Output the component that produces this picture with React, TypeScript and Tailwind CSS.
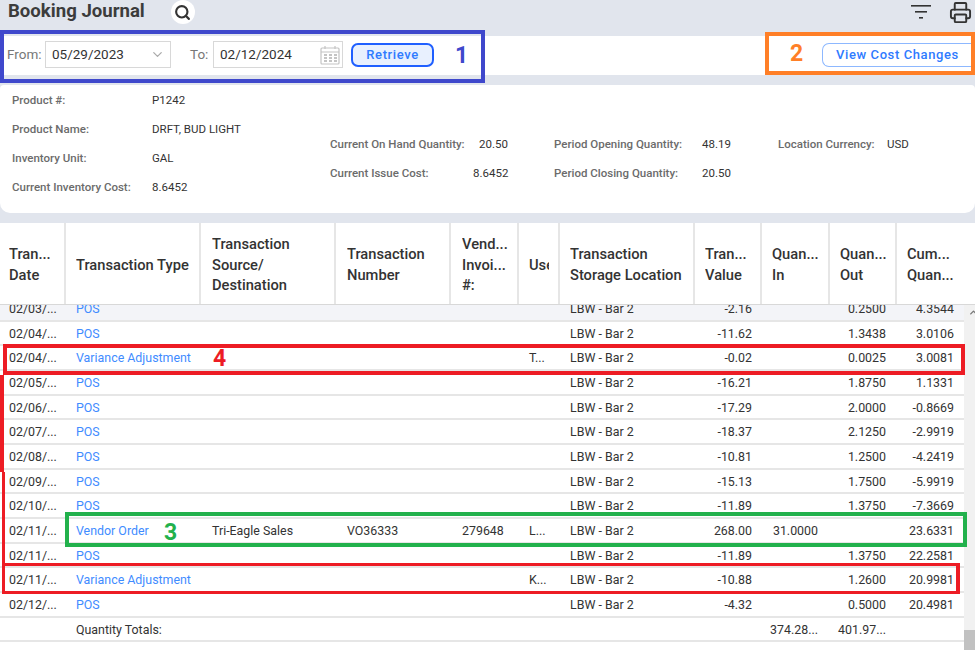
import { ChevronDown, ChevronUp, Printer, Search } from 'lucide-react';

const cols = 'grid grid-cols-[66px_135px_135px_115px_68px_41px_135px_67px_68px_67px_68px]';

type Row = {
  date: string;
  type: string;
  source?: string;
  number?: string;
  invoice?: string;
  user?: string;
  value: string;
  qtyIn?: string;
  qtyOut?: string;
  cum: string;
};

const rows: Row[] = [
  { date: '02/03/...', type: 'POS', value: '-2.16', qtyOut: '0.2500', cum: '4.3544' },
  { date: '02/04/...', type: 'POS', value: '-11.62', qtyOut: '1.3438', cum: '3.0106' },
  { date: '02/04/...', type: 'Variance Adjustment', user: 'T...', value: '-0.02', qtyOut: '0.0025', cum: '3.0081' },
  { date: '02/05/...', type: 'POS', value: '-16.21', qtyOut: '1.8750', cum: '1.1331' },
  { date: '02/06/...', type: 'POS', value: '-17.29', qtyOut: '2.0000', cum: '-0.8669' },
  { date: '02/07/...', type: 'POS', value: '-18.37', qtyOut: '2.1250', cum: '-2.9919' },
  { date: '02/08/...', type: 'POS', value: '-10.81', qtyOut: '1.2500', cum: '-4.2419' },
  { date: '02/09/...', type: 'POS', value: '-15.13', qtyOut: '1.7500', cum: '-5.9919' },
  { date: '02/10/...', type: 'POS', value: '-11.89', qtyOut: '1.3750', cum: '-7.3669' },
  { date: '02/11/...', type: 'Vendor Order', source: 'Tri-Eagle Sales', number: 'VO36333', invoice: '279648', user: 'L...', value: '268.00', qtyIn: '31.0000', cum: '23.6331' },
  { date: '02/11/...', type: 'POS', value: '-11.89', qtyOut: '1.3750', cum: '22.2581' },
  { date: '02/11/...', type: 'Variance Adjustment', user: 'K...', value: '-10.88', qtyOut: '1.2600', cum: '20.9981' },
  { date: '02/12/...', type: 'POS', value: '-4.32', qtyOut: '0.5000', cum: '20.4981' },
];

const headers = [
  { pad: 'pl-[9px]', lines: ['Tran...', 'Date'] },
  { pad: 'pl-[10px]', lines: ['Transaction Type'] },
  { pad: 'pl-[11px]', lines: ['Transaction', 'Source/', 'Destination'] },
  { pad: 'pl-[11px]', lines: ['Transaction', 'Number'] },
  { pad: 'pl-[11px]', lines: ['Vend...', 'Invoi...', '#:'] },
  { pad: 'pl-[10px]', lines: ['Use'] },
  { pad: 'pl-[10px]', lines: ['Transaction', 'Storage Location'] },
  { pad: 'pl-[10px]', lines: ['Tran...', 'Value'] },
  { pad: 'pl-[10px]', lines: ['Quan...', 'In'] },
  { pad: 'pl-[10px]', lines: ['Quan...', 'Out'] },
  { pad: 'pl-[10px]', lines: ['Cum...', 'Quan...'] },
];

function Info({ label, value, labelW }: { label: string; value: string; labelW: string }) {
  return (
    <div className="flex h-[29px] items-center">
      <span className={`${labelW} text-[#6b6b6b] font-medium`}>{label}</span>
      <span className="text-[#333]">{value}</span>
    </div>
  );
}

function BodyRow({ row, index }: { row: Row; index: number }) {
  return (
    <div className={`${cols} h-[24.67px] items-center border-b-2 border-[#e6e6e6] pt-[2px] text-[12.4px] text-[#333] ${index === 0 ? 'bg-[#f3f4f8]' : 'bg-white'}`}>
      <span className="pl-[9px]">{row.date}</span>
      <span className="pl-[10px] text-[#3f8cff]">{row.type}</span>
      <span className="pl-[11px]">{row.source}</span>
      <span className="pl-[11px]">{row.number}</span>
      <span className="pl-[11px]">{row.invoice}</span>
      <span className="pl-[10px]">{row.user}</span>
      <span className="pl-[10px]">LBW - Bar 2</span>
      <span className="pr-[10px] text-right">{row.value}</span>
      <span className="pr-[12px] text-right">{row.qtyIn}</span>
      <span className="pr-[11px] text-right">{row.qtyOut}</span>
      <span className="pr-[11px] text-right">{row.cum}</span>
    </div>
  );
}

export default function App() {
  return (
    <div className="relative h-[650px] w-[975px] overflow-hidden bg-[#e1e5ed] font-['Roboto',sans-serif]">
      <header className="flex h-[36px] items-center pb-[12px] pl-[8px] pr-[3px]">
        <h1 className="text-[18.6px] font-bold text-[#3c3c3c]">Booking Journal</h1>
        <span className="ml-[26px] flex h-[24px] w-[24px] items-center justify-center rounded-full bg-white">
          <Search className="h-[17px] w-[17px] text-[#333]" strokeWidth={3} />
        </span>
        <svg className="ml-auto h-[14px] w-[20px] text-[#333]" viewBox="0 0 20 14" fill="currentColor">
          <rect x="0" y="0" width="20" height="1.6" />
          <rect x="4" y="6" width="12" height="1.6" />
          <rect x="8" y="12" width="4" height="1.6" />
        </svg>
        <Printer className="ml-[18px] h-[23px] w-[23px] text-[#333]" strokeWidth={2} />
      </header>

      <section className="flex h-[39px] items-center bg-white pb-[2px] pl-[7px]">
        <span className="w-[38px] text-[13.5px] text-[#777]">From:</span>
        <div className="flex h-[27px] w-[126px] items-center justify-between border border-[#d8d8d8] pl-[6px] pr-[5px] text-[13.5px] text-[#333]">
          05/29/2023
          <ChevronDown className="h-[15px] w-[15px] text-[#aaa]" />
        </div>
        <span className="ml-[19px] w-[23px] text-[13.5px] text-[#777]">To:</span>
        <div className="flex h-[27px] w-[130px] items-center justify-between border border-[#d8d8d8] pl-[6px] pr-[1px] text-[13.5px] text-[#333]">
          02/12/2024
          <svg className="h-[22px] w-[22px] text-[#c4c4c4]" viewBox="0 0 22 22" fill="none" stroke="currentColor">
            <rect x="2" y="4" width="18" height="16" rx="1" strokeWidth="1.2" />
            <path d="M2 8h18M6 2v3M16 2v3" strokeWidth="1.2" />
            <path d="M5 11h3M10 11h3M15 11h3M5 14h3M10 14h3M15 14h3M5 17h3M10 17h3M15 17h3" strokeWidth="2" />
          </svg>
        </div>
        <button className="ml-[8px] h-[24px] w-[83px] rounded-[7px] border-2 border-[#1f5fff] bg-[#e8f0fe] text-[13px] font-medium tracking-[0.6px] text-[#2f7bff]">
          Retrieve
        </button>
        <button className="ml-auto h-[24px] w-[153px] rounded-l-[7px] border border-r-0 border-[#8db8ff] bg-white pl-[13px] text-left text-[13px] font-medium tracking-[0.6px] text-[#2f7bff]">
          View Cost Changes
        </button>
      </section>

      <section className="mt-[10px] flex h-[128px] rounded-t-[4px] rounded-b-[10px] bg-white pl-[12px] pt-[1px] text-[11.5px]">
        <div className="w-[318px]">
          <Info label="Product #:" value="P1242" labelW="w-[140px]" />
          <Info label="Product Name:" value="DRFT, BUD LIGHT" labelW="w-[140px]" />
          <Info label="Inventory Unit:" value="GAL" labelW="w-[140px]" />
          <Info label="Current Inventory Cost:" value="8.6452" labelW="w-[140px]" />
        </div>
        <div className="w-[224px] pt-[44px]">
          <Info label="Current On Hand Quantity:" value="20.50" labelW="w-[149px]" />
          <Info label="Current Issue Cost:" value="8.6452" labelW="w-[143px]" />
        </div>
        <div className="w-[224px] pt-[44px]">
          <Info label="Period Opening Quantity:" value="48.19" labelW="w-[148px]" />
          <Info label="Period Closing Quantity:" value="20.50" labelW="w-[148px]" />
        </div>
        <div className="pt-[44px]">
          <Info label="Location Currency:" value="USD" labelW="w-[109px]" />
        </div>
      </section>

      <section className="mt-[10px] h-[427px] bg-white">
        <div className={`${cols} h-[82px] rounded-t-[4px] border-b border-[#d8d8d8] bg-white text-[14.7px] font-medium leading-[20.7px] text-[#333]`}>
          {headers.map((col, i) => (
            <div key={i} className={`${col.pad} flex flex-col justify-center border-r-2 border-[#e6e6e6] pt-[3px] last:border-r-0`}>
              <div className="mr-[9px] overflow-hidden">
                {col.lines.map(line => (
                  <div key={line} className="whitespace-nowrap">{line}</div>
                ))}
              </div>
            </div>
          ))}
        </div>
        <div className="flex h-[345px]">
          <div className="w-[964px] overflow-hidden">
            <div className="mt-[-8px]">
              {rows.map((row, i) => (
                <BodyRow key={i} row={row} index={i} />
              ))}
              <div className={`${cols} h-[24.67px] items-center border-b-2 border-[#e6e6e6] pt-[2px] text-[12.4px] text-[#333]`}>
                <span />
                <span className="pl-[10px]">Quantity Totals:</span>
                <span />
                <span />
                <span />
                <span />
                <span />
                <span />
                <span className="pr-[12px] text-right">374.28...</span>
                <span className="pr-[11px] text-right">401.97...</span>
                <span />
              </div>
            </div>
          </div>
          <div className="flex w-[11px] flex-col justify-between overflow-hidden bg-[#f1f1f1]">
            <ChevronUp className="ml-[4px] mt-[2px] h-[11px] w-[11px] shrink-0 text-[#777]" strokeWidth={3} />
            <div className="h-[20px] bg-[#c1c1c1]" />
          </div>
        </div>
      </section>

      {/* numbered callouts drawn on top of the screenshot */}
      <div className="absolute left-0 top-[30px] h-[53px] w-[485px] border-[4px] border-[#3f48cc]" />
      <span className="absolute left-[455px] top-[42px] text-[23px] font-bold leading-[28px] text-[#3f48cc]">1</span>
      <div className="absolute left-[765px] top-[32px] h-[43px] w-[210px] border-[4px] border-[#ff7f27]" />
      <span className="absolute left-[790px] top-[40px] text-[23px] font-bold leading-[28px] text-[#ff7f27]">2</span>
      <div className="absolute left-[3px] top-[344px] h-[31px] w-[962px] border-[4px] border-[#ed1c24]" />
      <span className="absolute left-[213px] top-[345px] text-[23px] font-bold leading-[28px] text-[#ed1c24]">4</span>
      <div className="absolute left-0 top-[375px] h-[97px] w-[4px] bg-[#ed1c24]" />
      <div className="absolute left-[2px] top-[472px] h-[92px] w-[3px] bg-[#ed1c24]" />
      <div className="absolute left-[65px] top-[512px] h-[35px] w-[902px] border-[4px] border-[#22b14c]" />
      <span className="absolute left-[164px] top-[519px] text-[23px] font-bold leading-[28px] text-[#22b14c]">3</span>
      <div className="absolute left-[2px] top-[563px] h-[31px] w-[958px] border-[3px] border-r-[4px] border-[#ed1c24]" />
    </div>
  );
}
